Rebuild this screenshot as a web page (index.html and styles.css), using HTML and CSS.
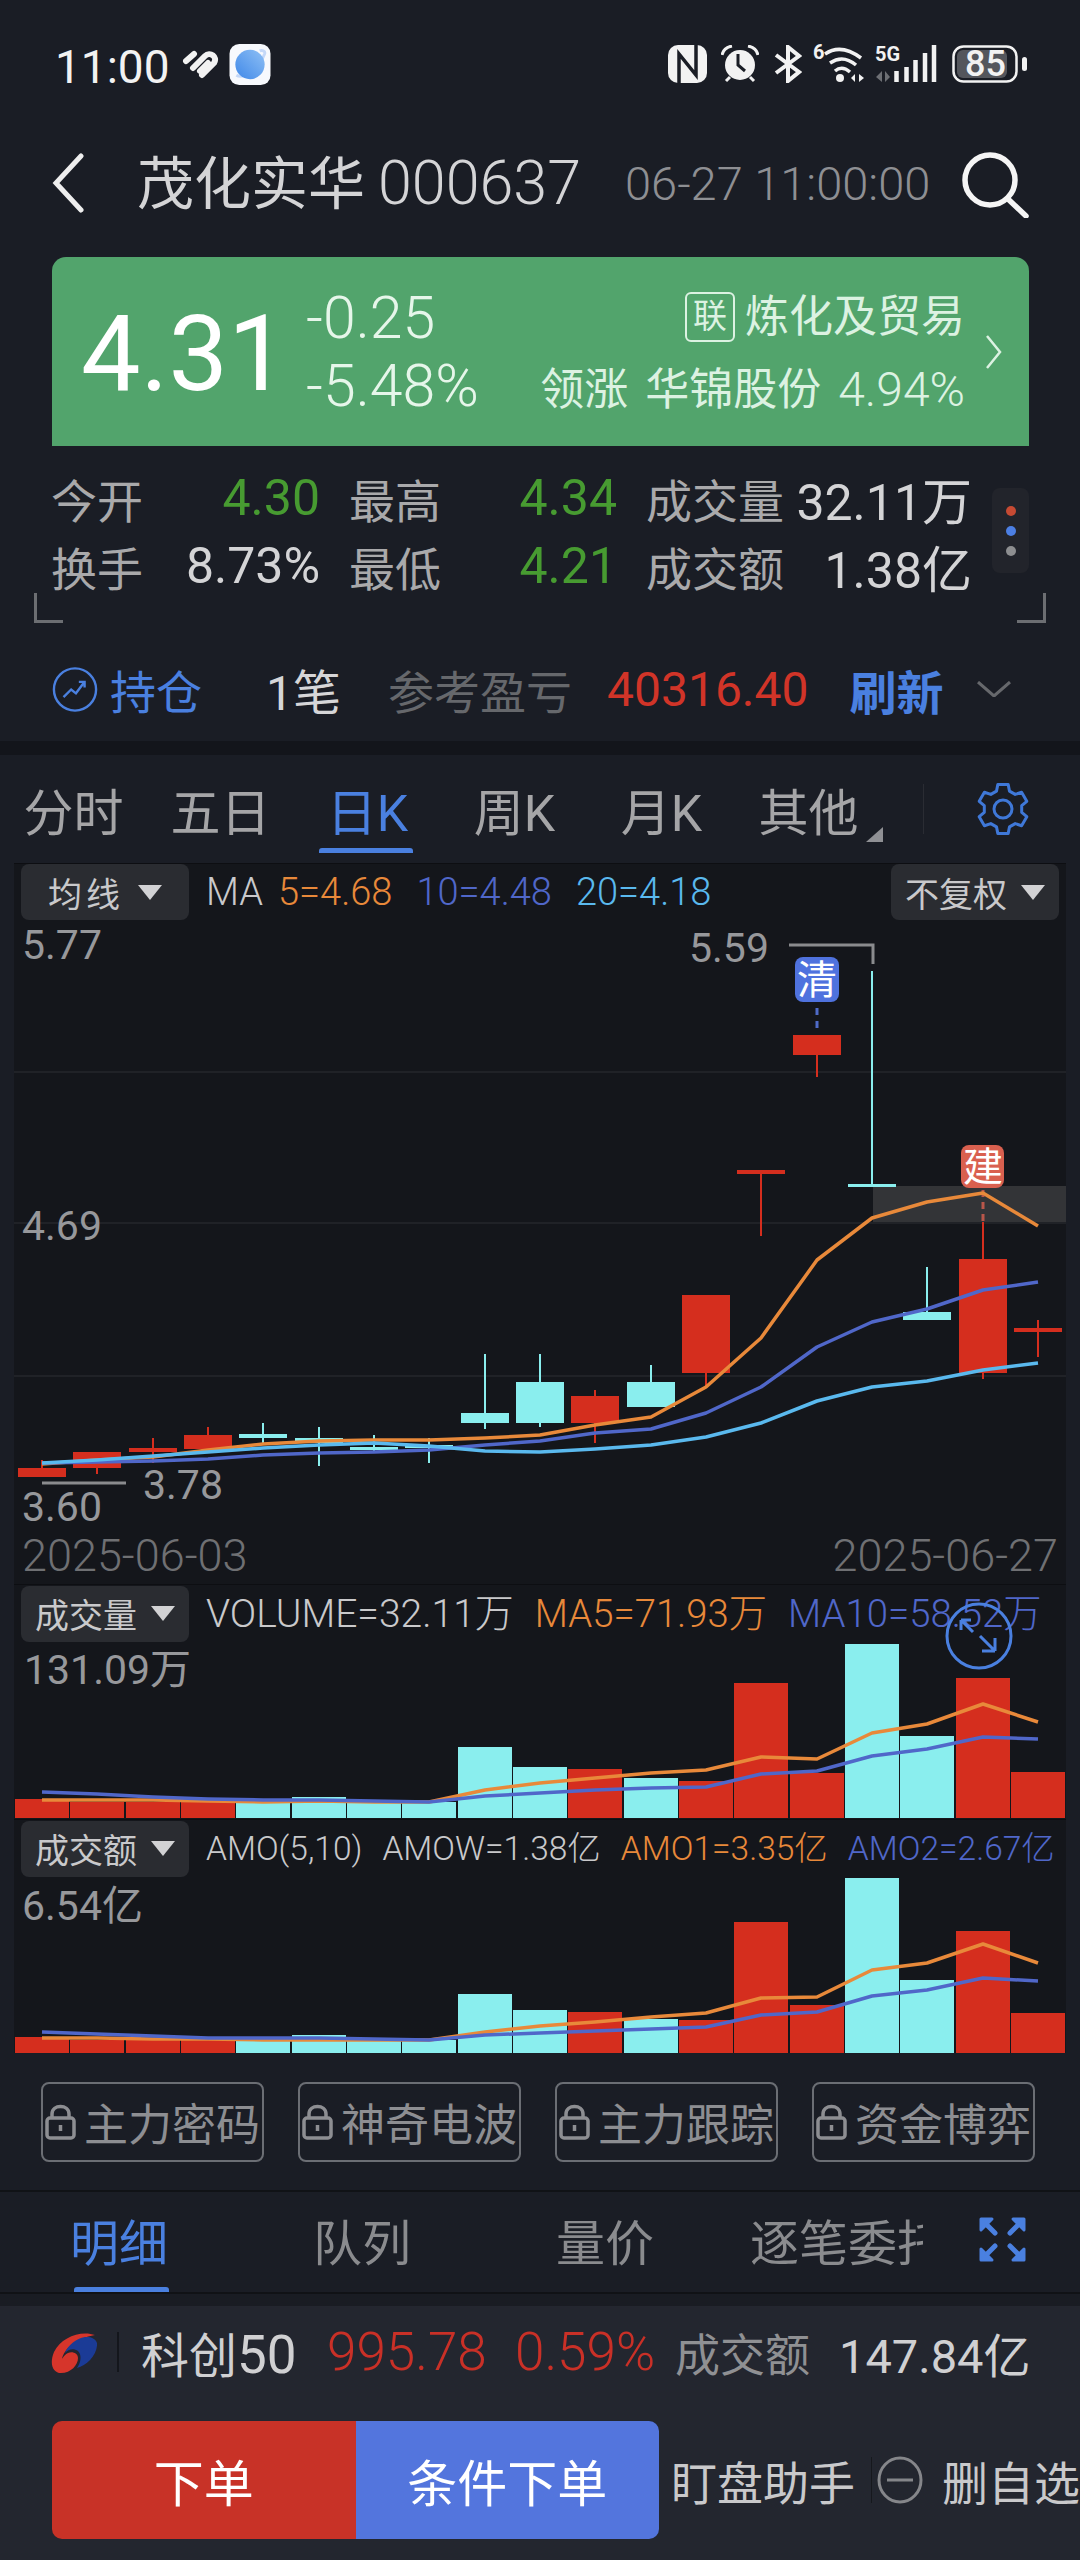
FILE: index.html
```html
<!DOCTYPE html>
<html lang="zh">
<head>
<meta charset="utf-8">
<title>茂化实华 000637</title>
<link rel="stylesheet" href="styles.css">
</head>
<body>
<div class="page">
  <div class="status">
    <span class="time">11:00</span>
    <svg class="app-heart" viewBox="0 0 37 30"><path d="M4 12 L12 5"/><path d="M11 19 L23 7 C28 2 36 8 32 14 L20 26"/><path d="M18 22 L26 14"/></svg>
    <svg class="app-planet" viewBox="0 0 42 42"><defs><linearGradient id="pg" x1="0" y1="1" x2="1" y2="0"><stop offset="0" stop-color="#3f88e8"/><stop offset="1" stop-color="#8fc0f5"/></linearGradient></defs><rect width="42" height="42" rx="10" fill="#f7f9fd"/><path d="M7 32 C14 36 30 26 36 10 C37 7 33 6 31 7" stroke="#c4d8f8" stroke-width="3" fill="none"/><circle cx="21" cy="21" r="15" fill="url(#pg)"/></svg>
    <div class="status-right">
      <svg class="ic-nfc" viewBox="0 0 39 38"><rect width="39" height="38" rx="10" fill="#f2f2f2"/><path d="M11 38V9L28 30V0" stroke="#1a1d25" stroke-width="3.5" fill="none"/></svg>
      <svg class="ic-alarm" viewBox="0 0 38 38"><circle cx="19" cy="20" r="15" fill="#f2f2f2"/><path d="M17 9V20L24 26" stroke="#1a1d25" stroke-width="3" fill="none"/><path d="M1 10 C2 5 6 2 11 1 M37 10 C36 5 32 2 27 1 M5 36 L9 32 M33 36 L29 32" stroke="#f2f2f2" stroke-width="3" fill="none"/></svg>
      <svg class="ic-bt" viewBox="0 0 29 38"><path d="M3 10 L26 27 L15 36 V2 L26 11 L3 28" stroke="#f2f2f2" stroke-width="4" fill="none"/></svg>
      <svg class="ic-wifi" viewBox="0 0 52 38"><text class="ic-txt" x="0" y="14">6</text><path d="M12 9 Q28 -2 48 13 M17 18 Q30 9 43 20 M22 26 Q29 20 37 27" stroke="#f2f2f2" stroke-width="3.5" fill="none"/><circle cx="27" cy="33" r="4" fill="#f2f2f2"/><path d="M38 33 L42 29 V37Z M46 29 L51 33 L46 37Z" fill="#f2f2f2"/></svg>
      <svg class="ic-sig" viewBox="0 0 62 38"><text class="ic-txt" x="0" y="16">5G</text><path d="M1 32 L7 26 V37Z M10 26 L15 32 L10 37Z" fill="#6d6f74"/><path d="M21.5 37V26 M31.5 37V22 M40.5 37V15 M50 37V8 M59 37V0" stroke="#f2f2f2" stroke-width="4.5"/></svg>
      <svg class="ic-bat" viewBox="0 0 75 38"><rect x="5" y="5" width="50" height="28" rx="6" fill="#54565c"/><rect x="1.5" y="1.5" width="63" height="35" rx="10" fill="none" stroke="#f2f2f2" stroke-width="2.5"/><text class="bat-txt" x="13" y="31">85</text><rect x="70" y="12" width="5" height="14" rx="2.5" fill="#f2f2f2"/></svg>
    </div>
  </div>

  <header class="header">
    <svg class="back" viewBox="0 0 32 60"><path d="M29 3 L4 30 L29 57" /></svg>
    <h1 class="title">茂化实华<span class="code">000637</span></h1>
    <span class="stamp">06-27 11:00:00</span>
    <svg class="search" viewBox="0 0 70 68"><circle cx="30" cy="30" r="25"/><path d="M48 49 L66 66"/></svg>
  </header>

  <section class="quote">
    <div class="price">4.31</div>
    <div class="delta"><span>-0.25</span><span>-5.48%</span></div>
    <div class="sector">
      <div class="sector-name"><span class="tag">联</span>炼化及贸易</div>
      <div class="sector-lead">领涨<span class="lead-stock">华锦股份</span><span class="lead-pct">4.94%</span></div>
    </div>
    <svg class="quote-more" viewBox="0 0 17 34"><path d="M2 1 L15 17 L2 33"/></svg>
  </section>

  <section class="stats">
    <div class="stats-grid">
      <div class="stat"><span>今开</span><b class="green">4.30</b></div>
      <div class="stat"><span>最高</span><b class="green">4.34</b></div>
      <div class="stat"><span>成交量</span><b>32.11万</b></div>
      <div class="stat"><span>换手</span><b>8.73%</b></div>
      <div class="stat"><span>最低</span><b class="green">4.21</b></div>
      <div class="stat"><span>成交额</span><b>1.38亿</b></div>
    </div>
    <div class="dots"><i class="dot-r"></i><i class="dot-b"></i><i class="dot-g"></i></div>
    <i class="corner corner-l"></i><i class="corner corner-r"></i>
  </section>

  <section class="position">
    <svg class="pos-ic" viewBox="0 0 48 48"><circle cx="24" cy="24" r="22"/><path d="M12 32 L20 24 L25 28 L34 16 M28 16 H34 V22"/></svg>
    <span class="pos-name">持仓</span>
    <span class="pos-count">1笔</span>
    <span class="pos-label">参考盈亏</span>
    <span class="pos-value">40316.40</span>
    <span class="pos-refresh">刷新</span>
    <svg class="pos-down" viewBox="0 0 34 16"><path d="M1 1 L17 15 L33 1"/></svg>
  </section>
  <div class="band"></div>

  <nav class="tabs">
    <span class="tab">分时</span>
    <span class="tab">五日</span>
    <span class="tab tab-on">日K</span>
    <span class="tab">周K</span>
    <span class="tab">月K</span>
    <span class="tab">其他<svg class="tab-tri" viewBox="0 0 17 15"><path d="M17 0V15H0Z"/></svg></span>
    <i class="tab-div"></i>
    <svg class="gear" viewBox="0 0 54 54"><polygon points="20.5,9.1 21.8,2.6 32.2,2.6 33.5,9.1 39.2,12.4 45.6,10.3 50.8,19.3 45.7,23.7 45.7,30.3 50.8,34.7 45.6,43.7 39.2,41.6 33.5,44.9 32.2,51.4 21.8,51.4 20.5,44.9 14.8,41.6 8.4,43.7 3.2,34.7 8.3,30.3 8.3,23.7 3.2,19.3 8.4,10.3 14.8,12.4"/><circle cx="27" cy="27" r="9"/></svg>
  </nav>

  <section class="chart">
    <div class="legend">
      <span class="pick pick-w">均线<i class="tri"></i></span>
      <span class="lg lg-ma">MA</span><span class="lg c-o lg-a">5=4.68</span><span class="lg c-b lg-b">10=4.48</span><span class="lg c-l lg-b">20=4.18</span>
      <span class="pick pick-r">不复权<i class="tri"></i></span>
    </div>
    <svg class="plot-price" viewBox="14 920 1052 607">
      <path class="grid" d="M14 1072H1066M14 1223H1066M14 1376H1066"/>
      <rect class="hl" x="873" y="1186" width="193" height="36"/>
      <path class="mark" d="M789 945H873V964M42 1483H126"/>
      <text class="axis" x="22" y="959">5.77</text>
      <text class="axis" x="22" y="1240">4.69</text>
      <text class="axis" x="689" y="962">5.59</text>
      <text class="axis" x="143" y="1499">3.78</text>
      <text class="axis" x="22" y="1521">3.60</text>
      <g class="up">
        <rect x="41" y="1460" width="2" height="10"/><rect x="18" y="1468" width="48" height="9"/>
        <rect x="96" y="1468" width="2" height="6"/><rect x="73" y="1452" width="48" height="16"/>
        <rect x="152" y="1438" width="2" height="25"/><rect x="129" y="1448" width="48" height="4"/>
        <rect x="207" y="1427" width="2" height="25"/><rect x="184" y="1435" width="48" height="14"/>
        <rect x="594" y="1390" width="2" height="53"/><rect x="571" y="1396" width="48" height="27"/>
        <rect x="705" y="1373" width="2" height="14"/><rect x="682" y="1295" width="48" height="78"/>
        <rect x="760" y="1172" width="2" height="64"/><rect x="737" y="1170" width="48" height="4"/>
        <rect x="816" y="1055" width="2" height="22"/><rect x="793" y="1035" width="48" height="20"/>
        <rect x="982" y="1222" width="2" height="157"/><rect x="959" y="1259" width="48" height="114"/>
        <rect x="1037" y="1320" width="2" height="37"/><rect x="1014" y="1328" width="48" height="4"/>
      </g>
      <g class="dn">
        <rect x="262" y="1423" width="2" height="20"/><rect x="239" y="1434" width="48" height="4"/>
        <rect x="318" y="1427" width="2" height="39"/><rect x="295" y="1438" width="48" height="5"/>
        <rect x="373" y="1435" width="2" height="17"/><rect x="350" y="1447" width="48" height="3"/>
        <rect x="428" y="1438" width="2" height="25"/><rect x="405" y="1445" width="48" height="3"/>
        <rect x="484" y="1354" width="2" height="75"/><rect x="461" y="1413" width="48" height="10"/>
        <rect x="539" y="1354" width="2" height="73"/><rect x="516" y="1382" width="48" height="41"/>
        <rect x="650" y="1365" width="2" height="42"/><rect x="627" y="1382" width="48" height="25"/>
        <rect x="871" y="971" width="2" height="214"/><rect x="848" y="1184" width="48" height="3"/>
        <rect x="926" y="1267" width="2" height="50"/><rect x="903" y="1312" width="48" height="8"/>
      </g>
      <path class="dash-b" d="M817 1008V1028"/>
      <path class="dash-r" d="M983 1190V1222"/>
      <polyline class="ma ma5" points="42,1464 97,1460 153,1457 208,1450 263,1444 319,1441 374,1440 429,1440 485,1438 540,1435 595,1425 651,1417 706,1387 761,1338 817,1260 872,1218 927,1202 983,1193 1038,1226"/>
      <polyline class="ma ma10" points="42,1463 97,1462 153,1461 208,1459 263,1455 319,1453 374,1452 429,1450 485,1445 540,1441 595,1433 651,1429 706,1413 761,1387 817,1347 872,1322 927,1309 983,1290 1038,1282"/>
      <polyline class="ma ma20" points="42,1463 97,1460 153,1456 208,1452 263,1448 319,1445 374,1443 429,1446 485,1451 540,1452 595,1449 651,1445 706,1437 761,1423 817,1401 872,1387 927,1381 983,1370 1038,1363"/>
      <rect class="flag-b" x="795" y="957" width="44" height="45" rx="8"/>
      <text class="flag-t" x="817" y="994">清</text>
      <rect class="flag-r" x="961" y="1145" width="43" height="43" rx="8"/>
      <text class="flag-t" x="983" y="1181">建</text>
    </svg>
    <div class="dates"><span>2025-06-03</span><span>2025-06-27</span></div>

    <div class="legend legend-v">
      <span class="pick">成交量<i class="tri"></i></span>
      <span class="lg lg-w lg-ma">VOLUME=32.11万</span><span class="lg lg-w lg-m c-o lg-c">MA5=71.93万</span><span class="lg lg-w lg-m c-b lg-c">MA10=58.52万</span>
    </div>
    <svg class="plot-vol" viewBox="14 1642 1052 177">
      <text class="axis" x="24" y="1684">131.09万</text>
      <g class="up"><rect x="15" y="1799" width="54" height="19"/><rect x="70" y="1802" width="54" height="16"/><rect x="126" y="1802" width="54" height="16"/><rect x="181" y="1802" width="54" height="16"/><rect x="568" y="1769" width="54" height="49"/><rect x="679" y="1781" width="54" height="37"/><rect x="734" y="1683" width="54" height="135"/><rect x="790" y="1773" width="54" height="45"/><rect x="956" y="1678" width="54" height="140"/><rect x="1011" y="1772" width="54" height="46"/></g>
      <g class="dn"><rect x="236" y="1802" width="54" height="16"/><rect x="292" y="1797" width="54" height="21"/><rect x="347" y="1802" width="54" height="16"/><rect x="402" y="1802" width="54" height="16"/><rect x="458" y="1747" width="54" height="71"/><rect x="513" y="1767" width="54" height="51"/><rect x="624" y="1778" width="54" height="40"/><rect x="845" y="1644" width="54" height="174"/><rect x="900" y="1736" width="54" height="82"/></g>
      <polyline class="ma ma5" points="42,1800 97,1800 153,1800 208,1801 263,1802 319,1801 374,1802 429,1802 485,1790 540,1783 595,1778 651,1773 706,1770 761,1757 817,1759 872,1733 927,1724 983,1704 1038,1722"/>
      <polyline class="ma ma10" points="42,1792 97,1794 153,1797 208,1799 263,1800 319,1800 374,1801 429,1802 485,1796 540,1793 595,1790 651,1788 706,1787 761,1774 817,1771 872,1756 927,1749 983,1737 1038,1739"/>
    </svg>

    <div class="legend legend-a">
      <span class="pick">成交额<i class="tri"></i></span>
      <span class="lg lg-s lg-ma">AMO(5,10)</span><span class="lg lg-s lg-d">AMOW=1.38亿</span><span class="lg lg-s c-o lg-d">AMO1=3.35亿</span><span class="lg lg-s c-b lg-d">AMO2=2.67亿</span>
    </div>
    <svg class="plot-amo" viewBox="14 1877 1052 176">
      <text class="axis" x="22" y="1920">6.54亿</text>
      <g class="up"><rect x="15" y="2037" width="54" height="16"/><rect x="70" y="2040" width="54" height="13"/><rect x="126" y="2040" width="54" height="13"/><rect x="181" y="2040" width="54" height="13"/><rect x="568" y="2012" width="54" height="41"/><rect x="679" y="2020" width="54" height="33"/><rect x="734" y="1922" width="54" height="131"/><rect x="790" y="2005" width="54" height="48"/><rect x="956" y="1931" width="54" height="122"/><rect x="1011" y="2013" width="54" height="40"/></g>
      <g class="dn"><rect x="236" y="2041" width="54" height="12"/><rect x="292" y="2035" width="54" height="18"/><rect x="347" y="2040" width="54" height="13"/><rect x="402" y="2040" width="54" height="13"/><rect x="458" y="1994" width="54" height="59"/><rect x="513" y="2010" width="54" height="43"/><rect x="624" y="2019" width="54" height="34"/><rect x="845" y="1878" width="54" height="175"/><rect x="900" y="1980" width="54" height="73"/></g>
      <polyline class="ma ma5" points="42,2038 97,2038 153,2039 208,2039 263,2040 319,2040 374,2040 429,2040 485,2032 540,2026 595,2022 651,2017 706,2013 761,1998 817,1997 872,1970 927,1963 983,1944 1038,1963"/>
      <polyline class="ma ma10" points="42,2032 97,2034 153,2036 208,2038 263,2038 319,2038 374,2039 429,2040 485,2035 540,2033 595,2031 651,2029 706,2027 761,2015 817,2012 872,1996 927,1990 983,1978 1038,1981"/>
    </svg>
    <svg class="zoom-fab" viewBox="0 0 68 68"><circle cx="34" cy="34" r="32"/><path d="M16 18 L28 30 M16 18 V28 M16 18 H26 M35 34 L50 49 M50 49 V36 M50 49 H37"/></svg>
  </section>

  <section class="locks">
    <span class="lock"><svg class="lock-ic" viewBox="0 0 31 36"><path class="lock-arc" d="M7 14V10C7 0 24 0 24 10V14"/><rect x="2" y="14" width="27" height="20" rx="3"/><path d="M15.5 21V27"/></svg>主力密码</span>
    <span class="lock"><svg class="lock-ic" viewBox="0 0 31 36"><path class="lock-arc" d="M7 14V10C7 0 24 0 24 10V14"/><rect x="2" y="14" width="27" height="20" rx="3"/><path d="M15.5 21V27"/></svg>神奇电波</span>
    <span class="lock"><svg class="lock-ic" viewBox="0 0 31 36"><path class="lock-arc" d="M7 14V10C7 0 24 0 24 10V14"/><rect x="2" y="14" width="27" height="20" rx="3"/><path d="M15.5 21V27"/></svg>主力跟踪</span>
    <span class="lock"><svg class="lock-ic" viewBox="0 0 31 36"><path class="lock-arc" d="M7 14V10C7 0 24 0 24 10V14"/><rect x="2" y="14" width="27" height="20" rx="3"/><path d="M15.5 21V27"/></svg>资金博弈</span>
  </section>

  <nav class="detail">
    <div class="detail-tabs">
      <span class="dt dt-on">明细</span>
      <span class="dt">队列</span>
      <span class="dt">量价</span>
      <span class="dt">逐笔委托</span>
    </div>
    <svg class="expand" viewBox="0 0 49 47"><path class="exp-l" d="M5 5L17 17M44 5L32 17M5 42L17 30M44 42L32 30"/><path class="exp-h" d="M3 14V3H14Z M46 14V3H35Z M3 33V44H14Z M46 33V44H35Z"/></svg>
  </nav>
  <div class="band-thin"></div>

  <footer class="foot">
    <div class="index">
      <svg class="logo" viewBox="0 0 46 41"><path fill="#d6352b" d="M44 3C30-2 10 5 3 20C-2 32 2 41 10 41C20 41 27 33 27 26C27 21 21 19 17 21C13 23 11 27 11 27C13 17 25 6 44 3Z"/><path fill="#1b3b96" d="M46 11C44 5 36 4 30 6C22 9 16 15 14 21C17 17 23 16 27 19C31 23 30 30 26 36C36 34 47 22 46 11Z"/></svg>
      <i class="idx-div"></i>
      <span class="idx-name">科创<span class="idx-num">50</span></span>
      <span class="idx-val">995.78</span>
      <span class="idx-val idx-pct">0.59%</span>
      <span class="idx-lab">成交额</span>
      <span class="idx-amt">147.84亿</span>
    </div>
    <div class="actions">
      <div class="btns"><span class="btn btn-r">下单</span><span class="btn btn-b">条件下单</span></div>
      <span class="act">盯盘助手</span>
      <i class="act-div"></i>
      <svg class="minus" viewBox="0 0 46 48"><ellipse cx="23" cy="24" rx="21" ry="22"/><path d="M10 24H36"/></svg>
      <span class="act act-del">删自选</span>
    </div>
  </footer>
</div>
</body>
</html>
```
FILE: styles.css
```css
* { box-sizing: border-box; }
html, body { margin: 0; padding: 0; background: #1a1d25; }
body { font-family: Roboto, "Noto Sans CJK SC", sans-serif; color: #d6d6d8; }
svg { display: block; flex: none; }
i { font-style: normal; }
.page { width: 1080px; height: 2560px; overflow: hidden; }

/* status bar */
.status { height: 150px; padding: 44px 53px 0 55px; display: flex; align-items: flex-start; }
.time { font-size: 46px; line-height: 42px; margin-top: 2px; color: #f2f2f2; width: 127px; }
.app-heart { width: 37px; height: 30px; margin-top: 5px; fill: none; stroke: #f2f2f2; stroke-width: 6; stroke-linecap: round; stroke-linejoin: round; }
.app-planet { width: 42px; height: 41px; margin-left: 10px; }
.status-right { margin-left: auto; display: flex; align-items: flex-start; }
.ic-nfc { width: 39px; height: 38px; margin-top: 1px; }
.ic-alarm { width: 38px; height: 38px; margin-left: 14px; margin-top: 1px; }
.ic-bt { width: 29px; height: 38px; margin-left: 14px; margin-top: 1px; }
.ic-wifi { width: 52px; height: 38px; margin-left: 11px; margin-top: 1px; overflow: visible; }
.ic-sig { width: 62px; height: 38px; margin-left: 10px; margin-top: 1px; overflow: visible; }
.ic-bat { width: 75px; height: 38px; margin-left: 15px; margin-top: 1px; overflow: visible; }
.ic-txt { font-size: 20px; font-weight: 700; fill: #f2f2f2; }
.bat-txt { font-size: 36px; font-weight: 500; fill: #f2f2f2; }

/* header */
.header { height: 107px; display: flex; align-items: flex-start; padding-left: 52px; }
.back { width: 32px; height: 60px; margin-top: 3px; fill: none; stroke: #eeeeee; stroke-width: 5; stroke-linecap: round; }
.title { margin: 0 0 0 53px; font-size: 57px; line-height: 66px; font-weight: 400; color: #d4d4d6; white-space: nowrap; width: 489px; }
.code { font-size: 61px; margin-left: 13px; font-weight: 300; }
.stamp { font-size: 47px; line-height: 66px; color: #8e8f93; font-weight: 300; margin-top: 1px; width: 335px; margin-left: -1px; white-space: nowrap; }
.search { width: 70px; height: 68px; fill: none; stroke: #f5f5f5; stroke-width: 5.5; stroke-linecap: round; }

/* quote card */
.quote { margin: 0 51px 0 52px; height: 189px; background: #52a46c; border-radius: 14px 14px 0 0; display: flex; color: #fff; position: relative; }
.price { font-size: 106px; line-height: 120px; margin: 37px 0 0 29px; width: 225px; font-weight: 400; }
.delta { display: flex; flex-direction: column; font-size: 59px; line-height: 68px; padding-top: 27px; color: #e6f6ea; font-weight: 300; }
.sector { margin-left: auto; margin-right: 64px; display: flex; flex-direction: column; align-items: flex-end; color: #dcf2e2; padding-top: 34px; }
.sector-name { font-size: 44px; line-height: 52px; display: flex; align-items: center; }
.tag { width: 50px; height: 50px; border: 2px solid #dcf2e2; border-radius: 6px; font-size: 34px; line-height: 44px; text-align: center; margin-right: 10px; }
.sector-lead { font-size: 44px; line-height: 52px; margin-top: 21px; white-space: nowrap; display: flex; align-items: center; }
.lead-stock { margin-left: 17px; }
.lead-pct { font-size: 48px; font-weight: 300; margin-left: 17px; }
.quote-more { position: absolute; left: 933px; top: 78px; width: 17px; height: 34px; fill: none; stroke: #dcf2e2; stroke-width: 2.5; }

/* stats */
.stats { height: 199px; position: relative; padding: 18px 0 0 51px; }
.stats-grid { display: grid; grid-template-columns: 269px 268px 326px; column-gap: 29px; grid-auto-rows: 68px; }
.stat { display: flex; justify-content: space-between; align-items: center; font-size: 46px; color: #a9a9ab; white-space: nowrap; }
.stat b { font-weight: 400; font-size: 50px; color: #d4d4d6; }
.stat b.green { color: #479b31; }
.dots { position: absolute; left: 992px; top: 42px; width: 37px; height: 85px; border-radius: 8px; background: #22242b; display: flex; flex-direction: column; align-items: center; justify-content: center; gap: 10px; }
.dots i { width: 10px; height: 10px; border-radius: 50%; }
.dot-r { background: #c64a33; }
.dot-b { background: #4c7fe3; }
.dot-g { background: #8d8e90; }
.corner { position: absolute; top: 147px; width: 29px; height: 30px; border-bottom: 3px solid #6c6e72; }
.corner-l { left: 34px; border-left: 3px solid #6c6e72; }
.corner-r { left: 1017px; border-right: 3px solid #6c6e72; }

/* position */
.position { height: 96px; padding: 0 0 8px 52px; display: flex; align-items: center; font-size: 46px; white-space: nowrap; }
.pos-ic { width: 46px; height: 47px; fill: none; stroke: #4a80e0; stroke-width: 2.5; }
.pos-name { margin-left: 12px; color: #4a80e0; }
.pos-count { margin-left: 64px; color: #d6d6d8; font-size: 48px; }
.pos-label { margin-left: 47px; color: #66686c; font-size: 46px; }
.pos-value { margin-left: 35px; color: #d13428; font-size: 48px; }
.pos-refresh { margin-left: 41px; color: #4a80e0; font-weight: 700; font-size: 47px; }
.pos-down { width: 34px; height: 16px; margin-left: 34px; fill: none; stroke: #66686c; stroke-width: 3; }
.band { height: 14px; background: #13151b; }

/* period tabs */
.tabs { height: 108px; display: flex; align-items: center; position: relative; }
.tab { width: 147px; text-align: center; font-size: 50px; color: #a5a5a7; position: relative; white-space: nowrap; }
.tab-on { color: #4a80e0; }
.tab-on::after { content: ""; position: absolute; left: 25px; top: 75px; width: 94px; height: 5px; border-radius: 3px 3px 0 0; background: #4a80e0; }
.tab-tri { position: absolute; left: 131px; top: 54px; width: 17px; height: 15px; fill: #8f9094; }
.tab-div { width: 1px; height: 50px; background: #2a2c33; margin-left: 41px; }
.gear { width: 54px; height: 54px; margin-left: 52px; fill: none; stroke: #3f78d8; stroke-width: 3; stroke-linejoin: round; }

/* chart */
.chart { margin: 0 14px; width: 1052px; height: 1190px; background: #14161b; position: relative; border-top: 1px solid #0d0e12; }
.legend { height: 56px; display: flex; align-items: center; padding-left: 7px; white-space: nowrap; }
.legend-v, .legend-a { height: 58px; border-top: 1px solid #0d0e12; }
.pick { width: 168px; height: 56px; background: #2a2c31; border-radius: 8px; display: flex; align-items: center; justify-content: center; font-size: 34px; color: #c9c9cb; flex: none; }
.pick-w { letter-spacing: 4px; }
.pick-r { margin-left: auto; margin-right: 7px; }
.tri { width: 0; height: 0; border-left: 12px solid transparent; border-right: 12px solid transparent; border-top: 15px solid #d2d2d4; margin-left: 14px; }
.lg { font-size: 38px; line-height: 44px; color: #c9c9cb; font-weight: 300; }
.lg-ma { margin-left: 17px; }
.lg-a { margin-left: 15px; }
.lg-b { margin-left: 24px; }
.lg-c { margin-left: 21px; }
.lg-d { margin-left: 20px; }
.lg-w { font-size: 39px; }
.lg-m { font-size: 38.3px; }
.lg-s { font-size: 33.5px; }
.c-o { color: #e8893a; }
.c-b { color: #5067c9; }
.c-l { color: #5ab9ee; }
.plot-price { width: 1052px; height: 607px; }
.plot-vol { width: 1052px; height: 177px; }
.plot-amo { width: 1052px; height: 176px; }
.grid { stroke: #202227; stroke-width: 2; fill: none; }
.hl { fill: #333437; }
.mark { stroke: #8a8b8e; stroke-width: 3; fill: none; }
.axis { font-size: 41px; fill: #97989b; font-weight: 400; }
.up { fill: #d52e1e; }
.dn { fill: #8aeeee; }
.dash-b { stroke: #4f6bc8; stroke-width: 3; stroke-dasharray: 7 6; }
.dash-r { stroke: #b9564a; stroke-width: 3; stroke-dasharray: 7 5; }
.ma { fill: none; stroke-width: 3.5; stroke-linejoin: round; }
.ma5 { stroke: #e8893a; }
.ma10 { stroke: #5067c9; }
.ma20 { stroke: #5ab9ee; }
.flag-b { fill: #4f72de; }
.flag-r { fill: #d9604f; }
.flag-t { font-size: 40px; fill: #fff; text-anchor: middle; }
.dates { height: 57px; display: flex; justify-content: space-between; align-items: center; padding: 0 8px; font-size: 45px; color: #6f7073; font-weight: 300; }
.zoom-fab { position: absolute; left: 931px; top: 738px; width: 68px; height: 68px; fill: none; stroke: #4a80e0; stroke-width: 3; }

/* lock buttons */
.locks { height: 137px; padding: 29px 0 0 41px; display: flex; gap: 34px; align-items: flex-start; }
.lock { width: 223px; height: 80px; border: 2px solid #6b6e74; border-radius: 8px; display: flex; align-items: center; font-size: 44px; color: #8d8e92; padding-left: 2px; white-space: nowrap; }
.lock-ic { width: 31px; height: 36px; margin-right: 8px; fill: none; stroke: #8d8e92; stroke-width: 3.5; }

/* detail tabs */
.detail { height: 104px; border-top: 2px solid #101216; border-bottom: 2px solid #101216; display: flex; align-items: flex-start; }
.detail-tabs { width: 923px; display: flex; overflow: hidden; }
.dt { flex: 0 0 243px; height: 100px; text-align: center; font-size: 49px; line-height: 62px; padding: 22px 5px 0 0; color: #8a8b8e; position: relative; white-space: nowrap; }
.dt-on { color: #4a80e0; }
.dt-on::after { content: ""; position: absolute; left: 74px; top: 95px; width: 95px; height: 5px; border-radius: 3px 3px 0 0; background: #4a80e0; }
.expand { width: 49px; height: 47px; margin: 24px 0 0 55px; }
.exp-l { fill: none; stroke: #4a80e0; stroke-width: 5; stroke-linecap: round; }
.exp-h { fill: #4a80e0; stroke: #4a80e0; stroke-width: 3; stroke-linejoin: round; }
.band-thin { height: 12px; background: #191c23; }

/* footer */
.foot { height: 254px; background: #23262f; }
.index { height: 92px; padding-left: 51px; display: flex; align-items: center; white-space: nowrap; }
.logo { width: 46px; height: 41px; }
.idx-div { width: 2px; height: 40px; background: #14161c; margin-left: 20px; }
.idx-name { margin-left: 22px; font-size: 48px; color: #d0d0d2; width: 186px; }
.idx-num { font-size: 53px; }
.idx-val { font-size: 53px; color: #c93027; font-weight: 300; width: 188px; }
.idx-pct { width: 160px; font-size: 53px; }
.idx-lab { font-size: 45px; color: #8f9093; width: 164px; }
.idx-amt { font-size: 47px; color: #d0d0d2; }
.actions { margin-top: 23px; padding-left: 52px; display: flex; align-items: center; white-space: nowrap; }
.btns { display: flex; width: 607px; height: 118px; border-radius: 10px; overflow: hidden; }
.btn { flex: 1; display: flex; align-items: center; justify-content: center; color: #fff; font-size: 50px; }
.btn-r { background: #c83227; }
.btn-b { background: #5375dd; }
.act { font-size: 46px; color: #c9c9cb; margin-left: 12px; }
.act-div { width: 1px; height: 46px; background: #16181d; margin-left: 16px; }
.minus { width: 46px; height: 48px; margin-left: 5px; fill: none; stroke: #85868a; stroke-width: 3; }
.act-del { margin-left: 19px; }
```
